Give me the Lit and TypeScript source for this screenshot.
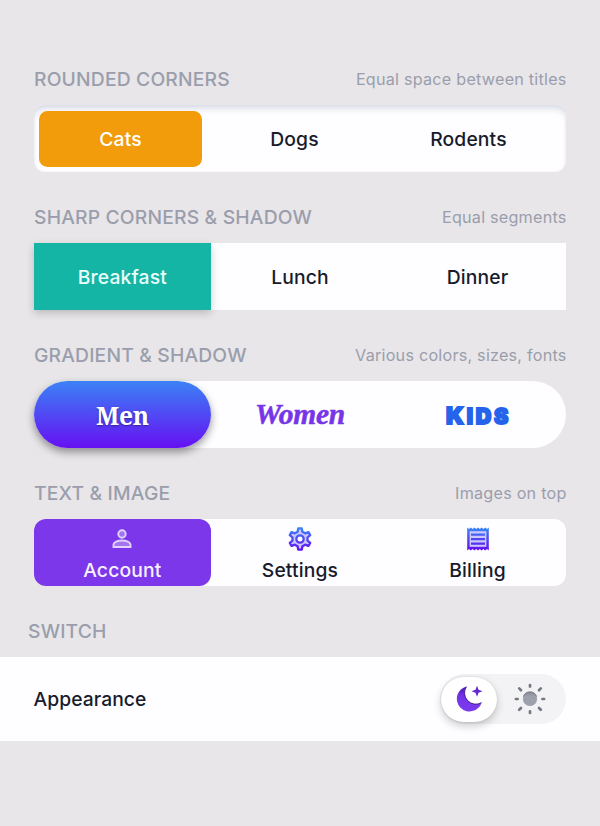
import { LitElement, html, css, svg } from "lit";
import { customElement, property } from "lit/decorators.js";

@customElement("section-title")
class SectionTitle extends LitElement {
  @property() heading = "";
  @property() note = "";
  static styles = css`
    :host { display: flex; justify-content: space-between; height: 28px; line-height: 28px; color: #9a9eac; white-space: nowrap; }
    .heading { font-size: 19.3px; font-weight: 500; letter-spacing: 0.17px; }
    .note { font-size: 16.2px; font-weight: 400; letter-spacing: 0.22px; margin-right: -0.2px; }
  `;
  render() {
    return html`<span class="heading">${this.heading}</span><span class="note">${this.note}</span>`;
  }
}

const gradient = (id: string) => svg`
  <linearGradient id=${id} x1="0" y1="0" x2="0" y2="24" gradientUnits="userSpaceOnUse">
    <stop offset="0.08" stop-color="#3b82f6"/><stop offset="0.92" stop-color="#6610f2"/>
  </linearGradient>`;

const person = html`<svg class="icon" viewBox="0 0 24 24">
  <g fill="#fff" fill-opacity=".3" stroke="#e2d3fd" stroke-width="1.9">
    <circle cx="12" cy="7" r="3.7"/>
    <path d="M3.5 20v-2.4c0-2.4 4.3-4.1 8.5-4.1s8.5 1.7 8.5 4.1V20z"/>
  </g></svg>`;

const gear = html`<svg class="icon" viewBox="0.5 0.5 23 23">
  <defs>${gradient("gear")}</defs>
  <g stroke="url(#gear)" stroke-width="2.2" stroke-linejoin="round">
    <path fill="#5b4bf5" fill-opacity=".3" d="M9.7 5.1 10.3 1.9h3.4l.6 3.2 2.6 1.5 3.2-1.2 1.7 2.9-2.6 2.2v3l2.6 2.2-1.7 2.9-3.2-1.2-2.6 1.5-.6 3.2h-3.4l-.6-3.2-2.6-1.5-3.2 1.2-1.7-2.9 2.6-2.2v-3L2.2 8.3l1.7-2.9 3.2 1.2z"/>
    <circle cx="12" cy="12" r="3.5" fill="#fff"/>
  </g></svg>`;

const receipt = html`<svg class="icon" viewBox="0 0 24 24">
  <defs>${gradient("receipt")}</defs>
  <path fill="url(#receipt)" fill-rule="evenodd" d="M1.2 .6l1.8 1.5L4.8 .6l1.8 1.5L8.4 .6l1.8 1.5L12 .6l1.8 1.5L15.6 .6l1.8 1.5L19.2 .6 21 2.1 22.8 .6v22.8L21 21.9 19.2 23.4l-1.8-1.5-1.8 1.5-1.8-1.5L12 23.4l-1.8-1.5L8.4 23.4l-1.8-1.5L4.8 23.4 3 21.9 1.2 23.4zM3.7 4.2v15.6h16.6V4.2z"/>
  <path fill="#5b4bf5" fill-opacity=".3" d="M3.7 4.2h16.6v15.6H3.7z"/>
  <path fill="url(#receipt)" d="M5 6.4h14v2.3H5zM5 10.9h14v2.3H5zM5 15.4h14v2.3H5z"/>
</svg>`;

const moon = html`<svg class="moon" viewBox="0 0 28 28">
  <defs><linearGradient id="night" x1="0" y1="0" x2="0" y2="1">
    <stop offset="0" stop-color="#4a1caf"/><stop offset=".4" stop-color="#7434e8"/><stop offset="1" stop-color="#7c3aed"/>
  </linearGradient></defs>
  <path fill="url(#night)" d="M11.6 1.4A12.7 12.7 0 1 0 26.7 17.5 11.3 11.3 0 0 1 11.6 1.4z"/>
  <path fill="none" stroke="#3d1788" stroke-width=".9" d="M11.4 1.7A11.3 11.3 0 0 0 26.5 17.7"/>
  <path fill="#6327d3" d="M22 .8l1.5 4 4 1.5-4 1.5L22 11.8l-1.5-4-4-1.5 4-1.5z"/>
</svg>`;

const sun = html`<svg class="sun" viewBox="0 0 32 32">
  <defs><linearGradient id="day" x1="0" y1="0" x2="0" y2="1">
    <stop offset="0" stop-color="#858a95"/><stop offset=".3" stop-color="#9ca0ad"/>
  </linearGradient></defs>
  <circle cx="16" cy="16" r="7.1" fill="url(#day)"/>
  <path d="M9.4 13.6a7 7 0 0 1 13.2 0" fill="none" stroke="#60656f" stroke-width=".9"/>
  <path stroke="#737883" stroke-width="2.7" stroke-linecap="round" d="M16 2v1.6M16 28.4v1.6M1.9 16h1.7M28.4 16h1.7M5.2 5.4l1.8 1.8M25 25l1.8 1.8M5.2 26.8 7 25M25 7.2l1.8-1.8"/>
</svg>`;

@customElement("app-root")
class AppRoot extends LitElement {
  static styles = css`
    :host { display: flex; flex-direction: column; box-sizing: border-box; height: 826px; padding-top: 65px; background: #e8e6e9; font-family: Inter, "Liberation Sans", sans-serif; color: #171b2b; }
    .group { height: 138px; padding: 0 33.6px 0 33.5px; }
    section-title { margin: 0 0 0 0.5px; }
    .control { display: flex; box-sizing: border-box; height: 67px; margin-top: 12.3px; background: #fefdff; font-size: 19.3px; font-weight: 500; letter-spacing: 0.15px; }
    .segment { flex: 1; display: flex; align-items: center; justify-content: center; white-space: nowrap; }
    .rounded { border-radius: 11px; padding: 5.5px; box-shadow: inset 0 6px 7px -3px #d3d8e2, inset 0 0 3px #eeedf2; padding-right: 16.5px; }
    .rounded .segment { flex: 163; }
    .rounded .middle { flex: 185; }
    .orange { background: #f39c0b; border-radius: 8.5px; color: #fff; }
    .teal { background: #15b5a6; color: #eafffb; box-shadow: 0 3px 8px #0003; }
    .pill { border-radius: 33.5px; }
    .blue { border-radius: 33.5px; background: linear-gradient(#3b82f6, #6610f2); box-shadow: 0 4px 8px #0006; color: #fff; }
    .men { font: 700 24.5px "Noto Serif", "Liberation Serif", serif; letter-spacing: -0.3px; padding-top: 2px; text-shadow: 0 1px 2px #0006; }
    .women { font: italic 700 29.5px "Liberation Serif", serif; letter-spacing: -0.3px; color: #7635e8; -webkit-text-stroke: 0.5px #7635e8; }
    .kids { font: 900 23.5px Inter, sans-serif; color: #2563eb; -webkit-text-stroke: 1.8px #2563eb; paint-order: stroke fill; letter-spacing: 2.8px; padding: 1px 0 0 2px; }
    .small { font-size: 21.5px; }
    .soft { border-radius: 12px; }
    .soft .segment { flex-direction: column; justify-content: flex-start; line-height: 24px; padding-top: 8px; box-sizing: border-box; }
    .icon { width: 24px; height: 24px; margin-bottom: 7px; }
    .violet { background: #7c37ea; color: #f7f0ff; border-radius: 12px; }
    .switch-title { margin: 0 28px; }
    .row { display: flex; align-items: center; justify-content: space-between; box-sizing: border-box; height: 84px; margin-top: 12px; padding: 0 34px 0 33.5px; background: #fefdff; font-size: 19.3px; font-weight: 500; letter-spacing: 0.06px; }
    .toggle { display: flex; align-items: center; width: 126px; height: 50px; border-radius: 25px; background: #f3f2f5; }
    .thumb { width: 56px; height: 45px; margin-left: 1px; border-radius: 22.5px; background: #fff; box-shadow: 0 4px 9px #0003, 0 0 2px #0002; display: flex; align-items: center; justify-content: center; }
    .moon { width: 28px; height: 28px; }
    .sun { width: 32px; height: 32px; margin-left: 17px; }
  `;
  render() {
    return html`
      <div class="group">
        <section-title heading="ROUNDED CORNERS" note="Equal space between titles"></section-title>
        <div class="control rounded">
          <div class="segment orange"><span>Cats</span></div>
          <div class="segment middle"><span>Dogs</span></div>
          <div class="segment"><span>Rodents</span></div>
        </div>
      </div>
      <div class="group">
        <section-title heading="SHARP CORNERS &amp; SHADOW" note="Equal segments"></section-title>
        <div class="control">
          <div class="segment teal"><span>Breakfast</span></div>
          <div class="segment"><span>Lunch</span></div>
          <div class="segment"><span>Dinner</span></div>
        </div>
      </div>
      <div class="group">
        <section-title heading="GRADIENT &amp; SHADOW" note="Various colors, sizes, fonts"></section-title>
        <div class="control pill">
          <div class="segment blue"><span class="men">Men</span></div>
          <div class="segment"><span class="women">Women</span></div>
          <div class="segment"><span class="kids">K<span class="small">IDS</span></span></div>
        </div>
      </div>
      <div class="group">
        <section-title heading="TEXT &amp; IMAGE" note="Images on top"></section-title>
        <div class="control soft">
          <div class="segment violet">${person}<span>Account</span></div>
          <div class="segment">${gear}<span>Settings</span></div>
          <div class="segment">${receipt}<span>Billing</span></div>
        </div>
      </div>
      <section-title class="switch-title" heading="SWITCH"></section-title>
      <div class="row">
        <span>Appearance</span>
        <div class="toggle"><div class="thumb">${moon}</div>${sun}</div>
      </div>`;
  }
}
